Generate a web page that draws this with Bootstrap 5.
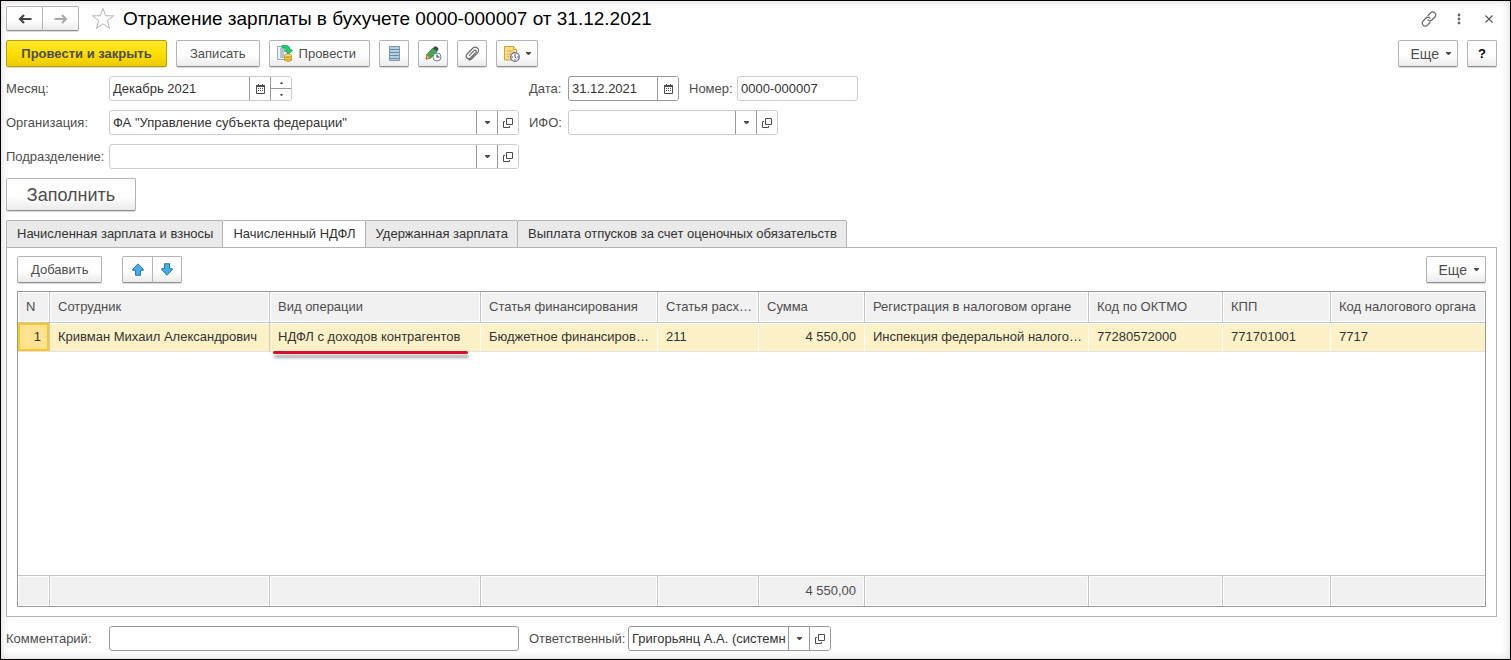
<!DOCTYPE html>
<html lang="ru">
<head>
<meta charset="utf-8">
<meta name="viewport" content="width=device-width, initial-scale=1">
<title>Отражение зарплаты в бухучете</title>
<link href="https://cdn.jsdelivr.net/npm/bootstrap@5.3.0/dist/css/bootstrap.min.css" rel="stylesheet">
<style>
body{font-family:"Liberation Sans",Arial,sans-serif;font-size:13px;line-height:16px;color:#4d4d4d;background:#fff}
.win{border:1px solid #000;padding:5px 13px 8px 5px;box-shadow:inset 0 0 8px rgba(70,30,50,.2)}
.win svg{display:block;flex:none}
.btn-c{display:flex;align-items:center;justify-content:center;height:27px;padding:0 13px;border:1px solid #b3b3b3;border-bottom-color:#8f8f8f;border-radius:2px;background:linear-gradient(#fff 55%,#ebebeb);color:#4d4d4d;box-shadow:0 1px 0 #ddd;font-size:13px;line-height:16px;white-space:nowrap}
.btn-c:hover{background:#f2f2f2}
.btn-main{background:linear-gradient(#ffe833,#ffdf00 50%,#eccb00);border-color:#b79e00;font-weight:700;width:161px;padding:0}
.btn-nav{height:25px;padding:0;width:37px}
.btn-sq{width:30px;padding:0}
.btn-more{font-size:14px;padding:0 6px 0 12px;gap:7px}
.join-l{border-radius:2px 0 0 2px}
.join-r{border-radius:0 2px 2px 0;margin-left:-1px}
.btn-fill{width:130px;height:33px;font-size:18px;line-height:22px;padding:0}
h1{font-size:19px;line-height:24px;font-weight:400;color:#000;margin:0}
.ico-btn{border:0;background:none;padding:0;color:#666}
.lab{width:103px;flex:none}
.fld{display:flex;height:25px;border:1px solid #ccc;border-radius:3px;background:#fff;overflow:hidden}
.fld.req{border-color:#999}
.fld input{border:0;outline:0;background:none;flex:1 1 0;min-width:0;padding:0 0 0 3px;color:#333}
.fld button{width:21px;border:0;border-left:1px solid #999;background:#fff;padding:0;display:flex;align-items:center;justify-content:center;color:#4d4d4d;flex:none}
.fld .spin{border-left:1px solid #999;width:21px}
.fld .spin button{border:0;width:100%;flex:1 1 0}
.fld .spin button+button{border-top:1px solid #999}
.w-long{width:410px;max-width:100%}
.w-month{width:183px}.w-date{width:111px}.w-num{width:121px}.w-ifo{width:210px}.w-resp{width:203px}
.short{width:39px;flex:none}
.tabs-c{border:0;gap:0}
.tabs-c .nav-link{border:1px solid #b3b3b3;border-radius:2px 2px 0 0;margin:0 0 0 -1px;background:#eaeaea;color:#333;padding:5px 9px 6px 10px;height:28px}
.tabs-c li:first-child .nav-link{margin-left:0}
.tabs-c .nav-link.active{background:#fff;color:#333;border-color:#b3b3b3 #b3b3b3 #fff}
.panel{border:1px solid #b3b3b3;margin-top:-1px;padding:8px 10px 9px}
.gridbox{display:grid;border:1px solid #999;margin-top:8px;min-height:0}
.gt{table-layout:fixed;width:100%;height:100%;border-collapse:separate;border-spacing:0}
.gt th,.gt td{padding:0 4px 0 8px;white-space:nowrap;overflow:hidden;text-overflow:ellipsis;vertical-align:middle}
.gt .text-end{padding-right:8px}
.gt thead th,.gt tfoot td{height:30px;font-weight:400;background:#f1f1f1;border-right:1px solid #c4c4c4;box-shadow:inset 0 0 0 1px #fff}
.gt thead th{height:31px;border-bottom:1px solid #c4c4c4}
.gt tfoot td{height:31px;border-top:1px solid #c4c4c4}
.gt .rec td{height:29px;background:#fdf1c8;border-right:1px solid #fff;border-bottom:1px solid #e2e2e2;color:#333;box-shadow:inset 0 1px #fff}
.gt .rec td:nth-child(2){border-right-color:#ccc}
.gt tr>:last-child{border-right:0!important}
.gt .rec td.cur{background:#ffe391;box-shadow:inset 0 0 0 2px #fcc71f;border-right-color:#ccc}
.gt .rec td.hl{overflow:visible;position:relative}
.hl::after{content:"";position:absolute;left:3px;right:12px;bottom:-3px;height:3px;border-radius:2px;background:#d9102d;box-shadow:1px 4px 3px rgba(0,0,0,.35)}
</style>
</head>
<body>
<svg width="0" height="0" class="position-absolute" aria-hidden="true">
<symbol id="cal" viewBox="0 0 9 10"><path d="M.5 2h8v7.500h-8z" fill="none" stroke="currentColor"/><path d="M0 1h9v2H0zM2 0h1v2H2zM6 0h1v2H6zM2 4h1v1H2zM4 4h1v1H4zM6 4h1v1H6zM2 6h1v1H2zM4 6h1v1H4zM6 6h1v1H6z" fill="currentColor"/></symbol>
<symbol id="dn" viewBox="0 0 5 3"><path d="M0 0h5v1L3 3H2L0 1z" fill="currentColor"/></symbol>
<symbol id="open" viewBox="0 0 10 10"><path d="M3.500.5h6v6h-6zM2 3.500H.5v6h6V8" fill="none" stroke="currentColor"/></symbol>
</svg>
<div class="win min-vh-100 d-flex flex-column">
 <header class="d-flex align-items-center">
  <button class="btn-c btn-nav join-l" aria-label="Назад"><svg width="14" height="10" viewBox="0 0 14 10"><path d="M13.500 5H2M6 1L2 5l4 4" fill="none" stroke="#444" stroke-width="2.200"/></svg></button>
  <button class="btn-c btn-nav join-r" aria-label="Вперед"><svg width="14" height="10" viewBox="0 0 14 10"><path d="M.5 5H12M8 1l4 4-4 4" fill="none" stroke="#a8a8a8" stroke-width="2"/></svg></button>
  <button class="ico-btn ms-2 me-2 ps-1" aria-label="Избранное"><svg width="24" height="23" viewBox="0 0 24 23"><path d="M12 1.500l2.600 7.200 7.900.2-6.200 4.700 2.200 7.700L12 16.800l-6.500 4.500 2.200-7.700L1.500 8.900l7.900-.2z" fill="#fff" stroke="#b0b4ba"/></svg></button>
  <h1>Отражение зарплаты в бухучете 0000-000007 от 31.12.2021</h1>
  <div class="ms-auto d-flex align-items-center gap-3">
   <button class="ico-btn" aria-label="Ссылка"><svg width="16" height="16" viewBox="0 0 16 16"><g fill="none" stroke="#666" stroke-width="1.200" stroke-linecap="round"><path d="M7 4.500l2.500-2.600a2.800 2.800 0 0 1 4.400 0 2.800 2.800 0 0 1 0 4.100l-3 3a2.700 2.700 0 0 1-3.800 0"/><path d="M9 11.500l-2.500 2.600a2.800 2.800 0 0 1-4.400 0 2.800 2.800 0 0 1 0-4.100l3-3a2.700 2.700 0 0 1 3.800 0"/></g></svg></button>
   <button class="ico-btn" aria-label="Меню"><svg width="12" height="12" viewBox="0 0 12 12" fill="#666"><circle cx="6" cy="2" r="1.400"/><circle cx="6" cy="6" r="1.400"/><circle cx="6" cy="10" r="1.400"/></svg></button>
   <button class="ico-btn me-1 ms-1" aria-label="Закрыть"><svg width="8" height="8" viewBox="0 0 8 8"><path d="M.5.5l7 7M7.500.5l-7 7" stroke="#555" stroke-width="1.100"/></svg></button>
  </div>
 </header>

 <div class="d-flex align-items-center" style="gap:9px;padding-top:9px">
  <button class="btn-c btn-main">Провести и закрыть</button>
  <button class="btn-c">Записать</button>
  <button class="btn-c" style="padding-left:7px;gap:6px"><svg width="16" height="17" viewBox="0 0 16 17"><path d="M.5 1.500h10v13H.5z" fill="#edf3f7" stroke="#9ab"/><path d="M3 4h5M3 6h5M3 8h4M3 10h4M3 12h4" stroke="#7d96a8"/><path d="M5 .5h3.500Q13 .5 13 5h2.500l-4 4.500L7.500 5H10Q10 3 7 3H5z" fill="#20cf6c" stroke="#159a50" stroke-width=".8"/><path d="M7.500 10v5.500q3.500 2 7 0V10z" fill="#f6cf4f" stroke="#c29620" stroke-width=".8"/><path d="M7.500 12q3.500 1.500 7 0M7.500 14q3.500 1.500 7 0" fill="none" stroke="#c29620" stroke-width=".8"/><ellipse cx="11" cy="10.300" rx="3.500" ry="1.200" fill="#ffe68a" stroke="#c29620" stroke-width=".7"/></svg>Провести</button>
  <button class="btn-c btn-sq" aria-label="Реестр"><svg width="11" height="15" viewBox="0 0 11 15"><path d="M.5.5h10v14H.5z" fill="#b4d0e4" stroke="#7896ad"/><path d="M1 3.500h9M1 6.500h9M1 9.500h9M1 12.500h9" stroke="#6a8aa3"/></svg></button>
  <button class="btn-c btn-sq" aria-label="Изменить"><svg width="17" height="16" viewBox="0 0 17 16"><path d="M1 13l1-4.500L8 2l4 3.500-6.500 6.700z" fill="#43a84a" stroke="#287531" stroke-width=".8"/><path d="M8 2l1.700-1.500q1-.7 2 .2l1.400 1.400q.8.8-.1 1.800L12 5.500z" fill="#3c4b57"/><path d="M2 8.500L1 13l4.500-.8z" fill="#e9b876" stroke="#a36a30" stroke-width=".7"/><circle cx="12" cy="11" r="4" fill="#fff" stroke="#69839b"/><path d="M12 8.500V11h2.500" fill="none" stroke="#334" stroke-width="1.100"/></svg></button>
  <button class="btn-c btn-sq" aria-label="Файлы"><svg width="14" height="15" viewBox="0 0 14 15"><path d="M4 9.800l5-5.200a1.300 1.300 0 0 1 1.900 1.800L5.500 12A2.600 2.600 0 0 1 1.700 8.500L8 2a3.300 3.300 0 0 1 4.700 4.600L6.500 13a3 3 0 0 1-3 .7" fill="none" stroke="#6b6b6b" stroke-width="1.200"/></svg></button>
  <button class="btn-c" aria-label="Напоминание" style="padding:0 6px 0 7px;gap:6px"><svg width="16" height="16" viewBox="0 0 16 16"><path d="M.5.5h9l3 3V14H.5z" fill="#f9dc82" stroke="#cfa33b"/><path d="M9.500.5v3h3" fill="#fff3bf" stroke="#cfa33b"/><path d="M3 5h6M3 8h4M3 10.500h2" stroke="#d8ae48"/><circle cx="11" cy="11" r="4.300" fill="#fff" stroke="#5279ac" stroke-width="1.300"/><path d="M11 7.500v1.500M11 13v1.500M7.500 11H9M13 11h1.500" stroke="#d22"/><path d="M11 9v2.300l1.500 1" stroke="#557" fill="none"/></svg><svg width="5" height="3"><use href="#dn"/></svg></button>
  <button class="btn-c btn-more ms-auto">Еще<svg width="5" height="3"><use href="#dn"/></svg></button>
  <button class="btn-c btn-sq fw-bold text-black">?</button>
 </div>

 <form class="d-flex flex-column" style="gap:9px;padding-top:9px">
  <div class="d-flex align-items-center">
   <div class="d-flex align-items-center" style="width:523px"><label class="lab" for="m">Месяц:</label>
    <div class="fld w-month"><input id="m" value="Декабрь 2021"><button type="button" aria-label="Календарь"><svg width="9" height="10"><use href="#cal"/></svg></button>
     <div class="spin d-flex flex-column"><button type="button" aria-label="Больше"><svg width="3" height="2"><path d="M1 0h1l1 2H0z" fill="#555"/></svg></button><button type="button" aria-label="Меньше"><svg width="3" height="2"><path d="M0 0h3L2 2H1z" fill="#555"/></svg></button></div></div></div>
   <label class="short" for="d">Дата:</label>
   <div class="fld req w-date"><input id="d" value="31.12.2021"><button type="button" aria-label="Календарь"><svg width="9" height="10"><use href="#cal"/></svg></button></div>
   <label for="n" style="width:58px;padding-left:10px">Номер:</label>
   <div class="fld w-num"><input id="n" value="0000-000007"></div>
  </div>
  <div class="d-flex align-items-center">
   <div class="d-flex align-items-center" style="width:523px"><label class="lab" for="o">Организация:</label>
    <div class="fld w-long"><input id="o" value="ФА &quot;Управление субъекта федерации&quot;"><button type="button" aria-label="Выбрать"><svg width="5" height="3"><use href="#dn"/></svg></button><button type="button" aria-label="Открыть"><svg width="10" height="10"><use href="#open"/></svg></button></div></div>
   <label class="short" for="i">ИФО:</label>
   <div class="fld w-ifo"><input id="i"><button type="button" aria-label="Выбрать"><svg width="5" height="3"><use href="#dn"/></svg></button><button type="button" aria-label="Открыть"><svg width="10" height="10"><use href="#open"/></svg></button></div>
  </div>
  <div class="d-flex align-items-center"><label class="lab" for="p">Подразделение:</label>
   <div class="fld w-long"><input id="p"><button type="button" aria-label="Выбрать"><svg width="5" height="3"><use href="#dn"/></svg></button><button type="button" aria-label="Открыть"><svg width="10" height="10"><use href="#open"/></svg></button></div></div>
  <button type="button" class="btn-c btn-fill">Заполнить</button>
 </form>

 <ul class="nav nav-tabs tabs-c" style="margin-top:9px">
  <li class="nav-item"><a class="nav-link" href="#">Начисленная зарплата и взносы</a></li>
  <li class="nav-item"><a class="nav-link active" href="#" aria-current="page">Начисленный НДФЛ</a></li>
  <li class="nav-item"><a class="nav-link" href="#">Удержанная зарплата</a></li>
  <li class="nav-item"><a class="nav-link" href="#">Выплата отпусков за счет оценочных обязательств</a></li>
 </ul>
 <main class="panel flex-grow-1 d-flex flex-column">
  <div class="d-flex">
   <button class="btn-c">Добавить</button>
   <div class="d-flex" style="margin-left:20px">
    <button class="btn-c btn-sq join-l" style="width:31px" aria-label="Вверх"><svg width="12" height="13" viewBox="0 0 12 13"><path d="M6 .8l5.300 5.500v1H8.500v5h-5v-5H.7v-1z" fill="#45adec" stroke="#2679ad"/></svg></button>
    <button class="btn-c btn-sq join-r" aria-label="Вниз"><svg width="12" height="13" viewBox="0 0 12 13"><path d="M6 12.200l5.300-5.500v-1H8.500v-5h-5v5H.7v1z" fill="#45adec" stroke="#2679ad"/></svg></button>
   </div>
   <button class="btn-c btn-more ms-auto">Еще<svg width="5" height="3"><use href="#dn"/></svg></button>
  </div>
  <div class="gridbox flex-grow-1">
   <table class="gt">
    <colgroup><col style="width:32px"><col style="width:220px"><col style="width:211px"><col style="width:177px"><col style="width:101px"><col style="width:106px"><col style="width:224px"><col style="width:134px"><col style="width:108px"><col></colgroup>
    <thead><tr><th>N</th><th>Сотрудник</th><th>Вид операции</th><th>Статья финансирования</th><th>Статья расх…</th><th>Сумма</th><th>Регистрация в налоговом органе</th><th>Код по ОКТМО</th><th>КПП</th><th>Код налогового органа</th></tr></thead>
    <tbody>
     <tr class="rec"><td class="cur text-end">1</td><td>Кривман Михаил Александрович</td><td class="hl">НДФЛ с доходов контрагентов</td><td>Бюджетное финансиров…</td><td>211</td><td class="text-end">4 550,00</td><td>Инспекция федеральной налого…</td><td>77280572000</td><td>771701001</td><td>7717</td></tr>
     <tr><td colspan="10"></td></tr>
    </tbody>
    <tfoot><tr><td></td><td></td><td></td><td></td><td></td><td class="text-end">4 550,00</td><td></td><td></td><td></td><td></td></tr></tfoot>
   </table>
  </div>
 </main>

 <footer class="d-flex align-items-center" style="padding-top:9px">
  <label class="lab" for="c">Комментарий:</label><div class="fld req w-long"><input id="c"></div>
  <label for="r" style="width:109px;padding-left:10px">Ответственный:</label>
  <div class="fld req w-resp"><input id="r" value="Григорьянц А.А. (системн"><button type="button" aria-label="Выбрать"><svg width="5" height="3"><use href="#dn"/></svg></button><button type="button" aria-label="Открыть"><svg width="10" height="10"><use href="#open"/></svg></button></div>
 </footer>
</div>
<script src="https://cdn.jsdelivr.net/npm/bootstrap@5.3.0/dist/js/bootstrap.bundle.min.js"></script>
</body>
</html>
